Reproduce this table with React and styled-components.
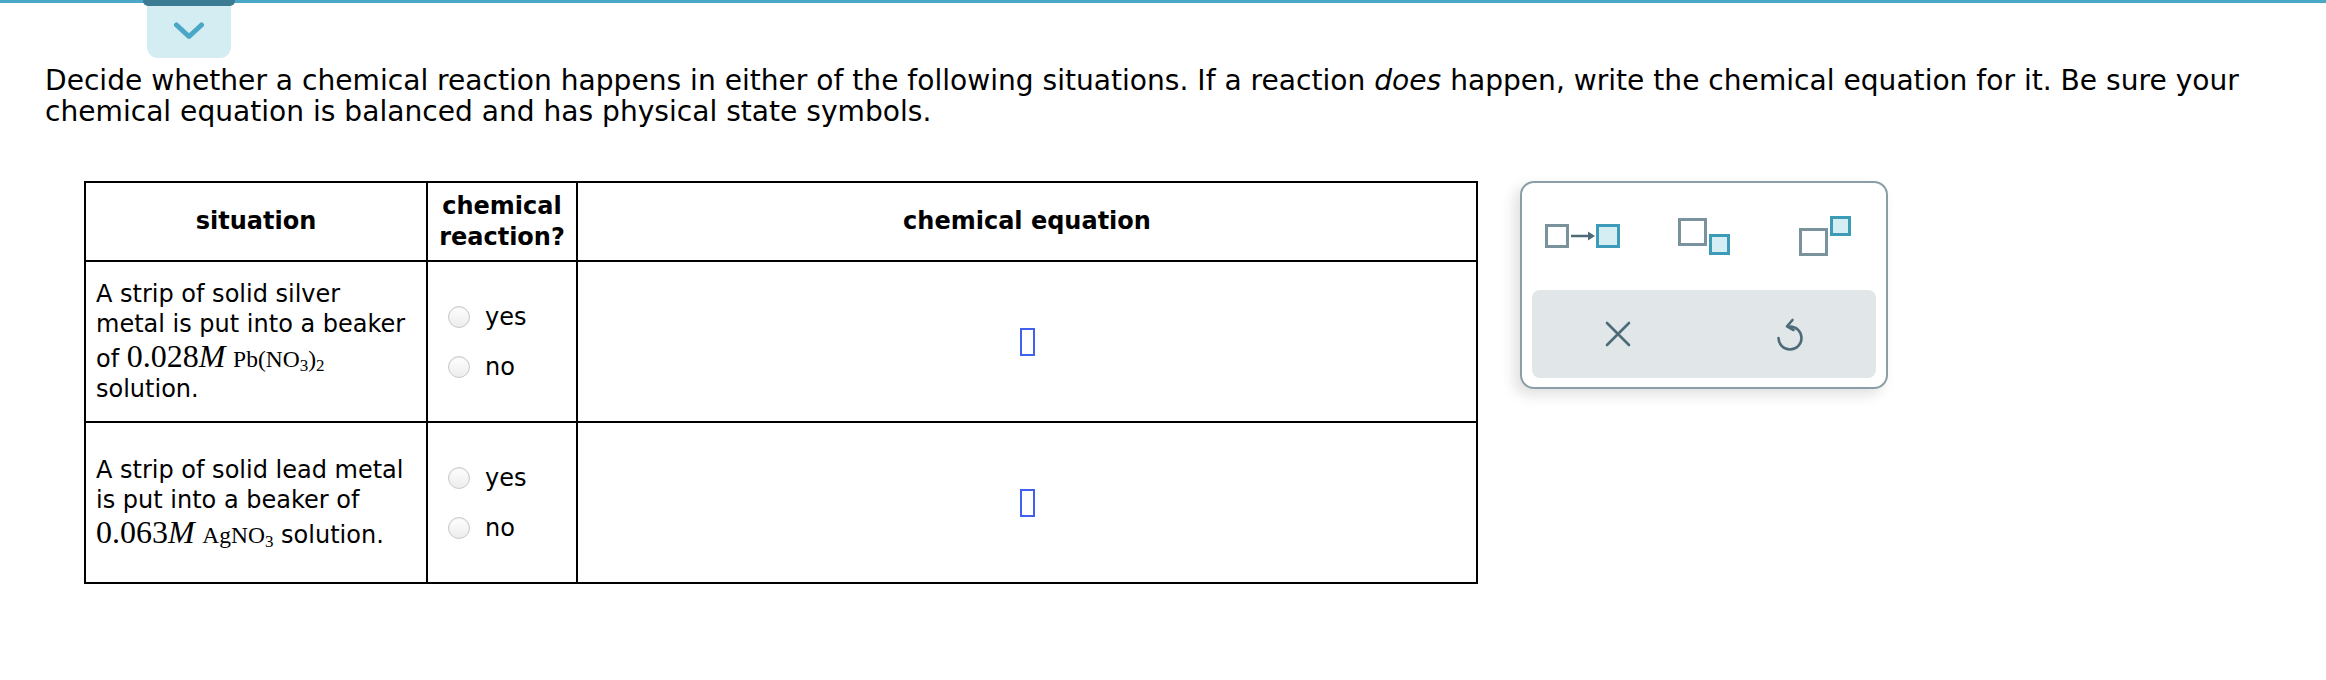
import React from 'react';
import styled, { createGlobalStyle } from 'styled-components';

const GlobalStyle = createGlobalStyle`
  html, body { margin: 0; padding: 0; background: #fff; }
  body { font-family: "DejaVu Sans", Verdana, sans-serif; color: #000; }
`;

const Page = styled.div`
  width: 2326px;
  min-height: 680px;
`;

const TopBar = styled.div`
  border-top: 3px solid #4aa8c6;
`;

const Tab = styled.button`
  position: relative;
  display: flex;
  align-items: center;
  justify-content: center;
  margin: -3px 0 0 147px;
  padding: 4px 0 0;
  width: 84px;
  height: 58px;
  box-sizing: border-box;
  background: #d3edf3;
  border: 0;
  border-radius: 0 0 11px 11px;
  &::before {
    content: '';
    position: absolute;
    top: 0;
    left: -4px;
    right: -4px;
    height: 6px;
    background: #3b7b93;
    border-radius: 0 0 5px 5px;
  }
`;

const Instructions = styled.p`
  margin: 7px 45px 0 45px;
  font-size: 28.1px;
  line-height: 31px;
`;

const Work = styled.div`
  display: flex;
  align-items: flex-start;
  gap: 42px;
  margin: 54px 0 0 84px;
`;

const Table = styled.table`
  border-collapse: collapse;
  table-layout: fixed;
  width: 1392px;
`;

const Col = styled.col`
  width: ${(p) => p.$w}px;
`;

const Th = styled.th`
  border: 2px solid #000;
  height: 77px;
  padding: 0 8px;
  font-size: 24px;
  line-height: 31px;
  font-weight: bold;
  text-align: center;
  vertical-align: middle;
`;

const Td = styled.td`
  border: 2px solid #000;
  height: 159px;
  padding: 0 10px;
  vertical-align: middle;
  text-align: ${(p) => (p.$center ? 'center' : 'left')};
`;

const Situation = styled.div`
  font-size: 24px;
  line-height: 30px;
`;

const Num = styled.span`
  font-family: "Liberation Serif", "Times New Roman", serif;
  font-size: 32px;
  line-height: 34px;
  i { font-style: italic; }
`;

const Formula = styled.span`
  font-family: "Liberation Serif", "Times New Roman", serif;
  font-size: 23.5px;
  sub { font-size: 17px; vertical-align: -4px; line-height: 0; }
`;

const Choices = styled.div`
  display: flex;
  flex-direction: column;
  gap: 20px;
  padding-left: 10px;
`;

const Choice = styled.label`
  display: flex;
  align-items: center;
  gap: 15px;
  font-size: 24px;
  line-height: 30px;
`;

const Radio = styled.input.attrs({ type: 'radio' })`
  appearance: none;
  margin: 0;
  width: 22px;
  height: 22px;
  border-radius: 50%;
  border: 1px solid #c9c9c9;
  background: linear-gradient(#ffffff, #ececec);
  box-shadow: inset 0 1px 1px rgba(0, 0, 0, 0.08);
`;

const AnswerSlot = styled.span`
  display: inline-block;
  width: 15px;
  height: 28px;
  box-sizing: border-box;
  border: 2px solid #3f61ee;
  vertical-align: middle;
`;

const Panel = styled.div`
  width: 368px;
  height: 208px;
  box-sizing: border-box;
  border: 2px solid #8b9ea6;
  border-radius: 14px;
  background: #fff;
  box-shadow: -6px 6px 14px rgba(0, 0, 0, 0.12);
  display: flex;
  flex-direction: column;
`;

const IconRow = styled.div`
  display: grid;
  grid-template-columns: repeat(3, 1fr);
  align-items: center;
  justify-items: center;
  height: 107px;
`;

const ActionBar = styled.div`
  margin: 0 10px;
  height: 88px;
  border-radius: 8px;
  background: #e1e6e9;
  display: grid;
  grid-template-columns: 1fr 1fr;
  align-items: center;
  justify-items: center;
`;

const IconButton = styled.button`
  background: none;
  border: 0;
  padding: 0;
  display: flex;
  align-items: center;
  justify-content: center;
`;

const GRAY = '#7a929b';
const TEAL = '#3c9bb6';
const FILL = '#d5eef3';
const DARK = '#4d6b77';

const ArrowIcon = () => (
  <svg width="75" height="25" viewBox="0 0 75 25">
    <rect x="1.5" y="1.5" width="21" height="21" fill="none" stroke={GRAY} strokeWidth="3" />
    <line x1="26" y1="12" x2="44" y2="12" stroke={DARK} strokeWidth="2.5" />
    <polygon points="43,7.5 50,12 43,16.5" fill={DARK} />
    <rect x="52.5" y="1.5" width="21" height="21" fill={FILL} stroke={TEAL} strokeWidth="3" />
  </svg>
);

const SubIcon = () => (
  <svg width="52" height="38" viewBox="0 0 52 38">
    <rect x="1.5" y="1.5" width="26" height="25" fill="none" stroke={GRAY} strokeWidth="3" />
    <rect x="32.5" y="17.5" width="18" height="18" fill={FILL} stroke={TEAL} strokeWidth="3" />
  </svg>
);

const SupIcon = () => (
  <svg width="52" height="41" viewBox="0 0 52 41">
    <rect x="1.5" y="13.5" width="26" height="25" fill="none" stroke={GRAY} strokeWidth="3" />
    <rect x="32.5" y="1.5" width="18" height="17" fill={FILL} stroke={TEAL} strokeWidth="3" />
  </svg>
);

const CloseIcon = () => (
  <svg width="26" height="26" viewBox="0 0 26 26">
    <path d="M2 2 L24 24 M24 2 L2 24" stroke={DARK} strokeWidth="2.6" strokeLinecap="round" />
  </svg>
);

const UndoIcon = () => (
  <svg width="28" height="34" viewBox="0 0 28 34">
    <path d="M14 9.5 A11.5 11.5 0 1 1 2.5 21" fill="none" stroke={DARK} strokeWidth="2.6" strokeLinecap="round" />
    <path d="M16.5 3 L11 9.3 L17.5 13" fill="none" stroke={DARK} strokeWidth="2.6" strokeLinecap="round" strokeLinejoin="round" />
  </svg>
);

const Chevron = () => (
  <svg width="32" height="18" viewBox="0 0 32 18">
    <path d="M3.5 3 L16 14.5 L28.5 3" fill="none" stroke="#4aa8c6" strokeWidth="5" strokeLinecap="round" strokeLinejoin="round" />
  </svg>
);

const YesNo = ({ name }) => (
  <Choices>
    <Choice>
      <Radio name={name} />
      yes
    </Choice>
    <Choice>
      <Radio name={name} />
      no
    </Choice>
  </Choices>
);

export default function App() {
  return (
    <Page>
      <GlobalStyle />
      <TopBar />
      <Tab aria-label="collapse">
        <Chevron />
      </Tab>
      <Instructions>
        Decide whether a chemical reaction happens in either of the following situations. If a reaction <i>does</i> happen,
        write the chemical equation for it. Be sure your chemical equation is balanced and has physical state symbols.
      </Instructions>
      <Work>
        <Table>
          <colgroup>
            <Col $w={342} />
            <Col $w={150} />
            <Col $w={900} />
          </colgroup>
          <thead>
            <tr>
              <Th>situation</Th>
              <Th>
                chemical
                <br />
                reaction?
              </Th>
              <Th>chemical equation</Th>
            </tr>
          </thead>
          <tbody>
            <tr>
              <Td>
                <Situation>
                  A strip of solid silver metal is put into a beaker of{' '}
                  <Num>
                    0.028<i>M</i>
                  </Num>{' '}
                  <Formula>
                    Pb(NO<sub>3</sub>)<sub>2</sub>
                  </Formula>{' '}
                  solution.
                </Situation>
              </Td>
              <Td>
                <YesNo name="r1" />
              </Td>
              <Td $center>
                <AnswerSlot />
              </Td>
            </tr>
            <tr>
              <Td>
                <Situation>
                  A strip of solid lead metal is put into a beaker of{' '}
                  <Num>
                    0.063<i>M</i>
                  </Num>{' '}
                  <Formula>
                    AgNO<sub>3</sub>
                  </Formula>{' '}
                  solution.
                </Situation>
              </Td>
              <Td>
                <YesNo name="r2" />
              </Td>
              <Td $center>
                <AnswerSlot />
              </Td>
            </tr>
          </tbody>
        </Table>
        <Panel>
          <IconRow>
            <IconButton aria-label="reaction arrow">
              <ArrowIcon />
            </IconButton>
            <IconButton aria-label="subscript">
              <SubIcon />
            </IconButton>
            <IconButton aria-label="superscript">
              <SupIcon />
            </IconButton>
          </IconRow>
          <ActionBar>
            <IconButton aria-label="clear">
              <CloseIcon />
            </IconButton>
            <IconButton aria-label="undo">
              <UndoIcon />
            </IconButton>
          </ActionBar>
        </Panel>
      </Work>
    </Page>
  );
}
